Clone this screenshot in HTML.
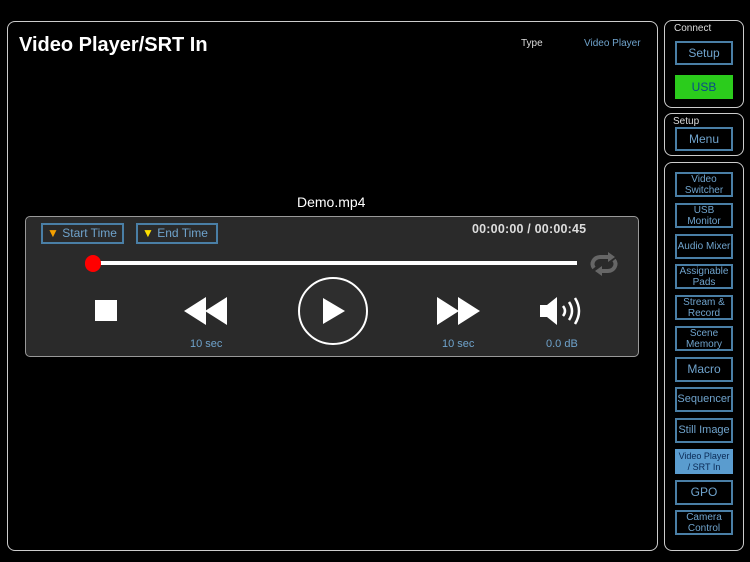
<!DOCTYPE html><html><head><style>
body{margin:0;width:750px;height:562px;background:#000;font-family:"Liberation Sans",sans-serif;position:relative;overflow:hidden}
.p{position:absolute;border:1.5px solid #ccc;border-radius:8px;box-sizing:border-box}
.b{position:absolute;left:675px;width:58px;border:2px solid #4a7fa6;box-sizing:border-box;color:#6fa3cc;font-size:10px;text-align:center;display:flex;align-items:center;justify-content:center;line-height:11px}
.a{position:absolute;color:#6fa3cc}
</style></head><body>
<div class="p" style="left:7px;top:21px;width:651px;height:530px"></div>
<div style="position:absolute;left:19px;top:34px;color:#fff;font-size:20px;font-weight:bold">Video Player/SRT In</div>
<div style="position:absolute;left:521px;top:38px;color:#ddd;font-size:10px">Type</div>
<div class="a" style="left:584px;top:38px;font-size:10px">Video Player</div>
<div style="position:absolute;left:297px;top:194px;color:#fff;font-size:14px">Demo.mp4</div>
<div style="position:absolute;left:25px;top:216px;width:614px;height:141px;background:#2a2a2a;border:1px solid #999;border-radius:5px;box-sizing:border-box"></div>
<div style="position:absolute;left:41px;top:223px;width:83px;height:21px;border:2px solid #4a7fa6;box-sizing:border-box;color:#6fa3cc;font-size:12px;line-height:17px;padding-left:4px"><span style="color:#f5a000">▼</span> Start Time</div>
<div style="position:absolute;left:136px;top:223px;width:82px;height:21px;border:2px solid #4a7fa6;box-sizing:border-box;color:#6fa3cc;font-size:12px;line-height:17px;padding-left:4px"><span style="color:#ffe000">▼</span> End Time</div>
<div style="position:absolute;left:472px;top:222px;color:#ddd;font-size:12.5px;font-weight:bold;letter-spacing:0.2px">00:00:00 / 00:00:45</div>
<div style="position:absolute;left:92px;top:261px;width:485px;height:4px;background:#fff"></div>
<div style="position:absolute;left:85px;top:255px;width:16px;height:17px;border-radius:8px;background:#f00"></div>
<svg style="position:absolute;left:588px;top:252px" width="34" height="24" viewBox="0 0 34 24"><path d="M6 16 A8 7 0 0 1 12 5 H22 M26 8 A8 7 0 0 1 20 19 H10" stroke="#666" stroke-width="4" fill="none"/><path d="M20 0 L27 5 L20 10Z M14 14 L7 19 L14 24Z" fill="#666"/></svg>
<div style="position:absolute;left:95px;top:300px;width:22px;height:21px;background:#fff"></div>
<svg style="position:absolute;left:183px;top:296px" width="46" height="30"><path d="M1 15 L23 1 V29Z M22 15 L44 1 V29Z" fill="#fff"/></svg>
<svg style="position:absolute;left:297px;top:277px" width="72" height="68"><ellipse cx="36" cy="34" rx="34" ry="33" fill="#2e2e2e" stroke="#fff" stroke-width="2"/><path d="M26 21 L48 34 L26 47Z" fill="#fff"/></svg>
<svg style="position:absolute;left:436px;top:296px" width="46" height="30"><path d="M1 1 L23 15 L1 29Z M22 1 L44 15 L22 29Z" fill="#fff"/></svg>
<svg style="position:absolute;left:539px;top:296px" width="48" height="30"><path d="M1 9 H8 L18 1 V29 L8 21 H1Z" fill="#fff"/><path d="M24 10 Q28 15 24 20 M30 6 Q36 15 30 24 M36 2 Q44 15 36 28" stroke="#fff" stroke-width="2.5" fill="none"/></svg>
<div class="a" style="left:190px;top:338px;font-size:11px">10 sec</div>
<div class="a" style="left:442px;top:338px;font-size:11px">10 sec</div>
<div class="a" style="left:546px;top:338px;font-size:11px">0.0 dB</div>

<div class="p" style="left:664px;top:20px;width:80px;height:88px"></div>
<div style="position:absolute;left:674px;top:23px;color:#ddd;font-size:10px">Connect</div>
<div class="b" style="top:41px;height:24px;font-size:12px">Setup</div>
<div class="b" style="top:75px;height:24px;font-size:12px;background:#2bcc1c;border-color:#2bcc1c;color:#0a4a8a">USB</div>
<div class="p" style="left:664px;top:113px;width:80px;height:43px"></div>
<div style="position:absolute;left:673px;top:116px;color:#ddd;font-size:10px">Setup</div>
<div class="b" style="top:127px;height:24px;font-size:12px">Menu</div>
<div class="p" style="left:664px;top:162px;width:80px;height:389px"></div>
<div class="b" style="top:172px;height:25px">Video<br>Switcher</div>
<div class="b" style="top:203px;height:25px">USB<br>Monitor</div>
<div class="b" style="top:234px;height:25px">Audio Mixer</div>
<div class="b" style="top:264px;height:25px">Assignable<br>Pads</div>
<div class="b" style="top:295px;height:25px">Stream &amp;<br>Record</div>
<div class="b" style="top:326px;height:25px">Scene<br>Memory</div>
<div class="b" style="top:357px;height:25px;font-size:12px">Macro</div>
<div class="b" style="top:387px;height:25px;font-size:11px">Sequencer</div>
<div class="b" style="top:418px;height:25px;font-size:11px">Still Image</div>
<div class="b" style="top:449px;height:25px;background:#5a9ccf;border-color:#5a9ccf;color:#0a2a55;font-size:9px">Video Player<br>/ SRT In</div>
<div class="b" style="top:480px;height:25px;font-size:12px">GPO</div>
<div class="b" style="top:510px;height:25px">Camera<br>Control</div>
</body></html>
